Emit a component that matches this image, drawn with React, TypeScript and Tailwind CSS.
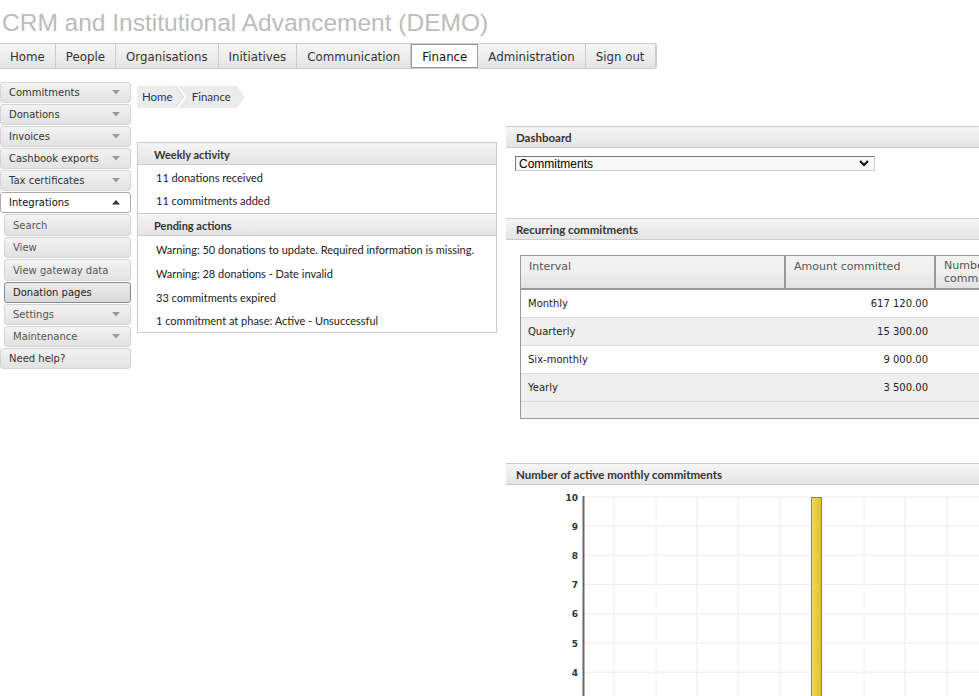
import React from "react";

const V = { fontFamily: '"DejaVu Sans", Verdana, sans-serif' };
const S = { fontFamily: 'Lato, "Open Sans", sans-serif' };

function NavItem({ label, active, last }: { label: string; active?: boolean; last?: boolean }) {
  return (
    <div
      className={
        "flex h-full items-center px-[10px] pt-[3px] text-[11.8px] border-r " +
        (active
          ? "bg-white text-[#111] border border-[#999] -my-px h-[26px]"
          : "bg-gradient-to-b from-[#f6f6f6] to-[#e4e4e4] text-[#333] border-[#ccc]") +
        (last ? " rounded-r-[3px]" : "")
      }
    >
      {label}
    </div>
  );
}

function DownArrow() {
  return (
    <svg width="8" height="5" viewBox="0 0 8 5">
      <path d="M0 0 L8 0 L4 4.5 Z" fill="#999" />
    </svg>
  );
}
function UpArrow() {
  return (
    <svg width="8" height="5" viewBox="0 0 8 5">
      <path d="M0 4.5 L8 4.5 L4 0 Z" fill="#333" />
    </svg>
  );
}

function SideItem({ label, arrow, sub, active, open, tall }: { label: string; arrow?: boolean; sub?: boolean; active?: boolean; open?: boolean; tall?: boolean }) {
  let cls = "flex items-center justify-between rounded-[3px] border text-[10px] pr-[10px] ";
  cls += tall ? "h-[22px] " : "h-[21px] ";
  cls += sub ? "ml-[4px] pl-[8px] " : "pl-[8px] ";
  if (open) cls += "bg-white border-[#aaa] text-[#111] ";
  else if (active) cls += "bg-gradient-to-b from-[#ececec] to-[#d8d8d8] border-[#888] text-[#222] ";
  else cls += "bg-gradient-to-b from-[#f3f3f3] to-[#e2e2e2] border-[#d4d4d4] " + (sub ? "text-[#555] " : "text-[#333] ");
  return (
    <div className={cls} style={V}>
      <span>{label}</span>
      {open ? <UpArrow /> : arrow ? <DownArrow /> : null}
    </div>
  );
}

function PanelHeader({ title, left }: { title: string; left?: boolean }) {
  return (
    <div
      className={
        "flex items-center bg-gradient-to-b from-[#f5f5f5] to-[#e5e5e5] font-bold text-[#333] " +
        (left ? "h-[22px] pl-[16px] pt-[3px] text-[11px] border-b border-[#ccc]" : "h-[20px] pl-[10px] pt-[1px] text-[11.5px]")
      }
      style={S}
    >
      {title}
    </div>
  );
}

function Chart() {
  const hy = [10, 39.2, 68.4, 97.6, 126.8, 156, 185.2];
  const vx = [108, 150, 191, 232, 274, 316, 358, 399, 441];
  return (
    <svg width="473" height="214" viewBox="0 0 473 214" className="block">
      {hy.map((y) => (
        <line key={y} x1="77" x2="473" y1={y} y2={y} stroke="#eeeeee" strokeWidth="1" />
      ))}
      {vx.map((x) => (
        <line key={x} x1={x} x2={x} y1="10" y2="214" stroke="#eeeeee" strokeWidth="1" />
      ))}
      <defs>
        <linearGradient id="bar" x1="0" x2="1" y1="0" y2="0">
          <stop offset="0" stopColor="#f0dc60" />
          <stop offset="1" stopColor="#dcc020" />
        </linearGradient>
      </defs>
      <rect x="305.5" y="10.5" width="10" height="210" fill="url(#bar)" stroke="#8a8460" strokeWidth="1" />
      <line x1="77.5" x2="77.5" y1="9" y2="214" stroke="#666" strokeWidth="2" />
      {["10", "9", "8", "7", "6", "5", "4"].map((t, i) => (
        <text key={t} x="72" y={hy[i] + 3.5} textAnchor="end" fontSize="9" fontWeight="bold" fill="#333" style={V}>
          {t}
        </text>
      ))}
    </svg>
  );
}

export default function App() {
  return (
    <div className="w-[979px] h-[696px] overflow-hidden bg-white">
      <div
        className="h-[43px] pl-[2px] pt-[8px] text-[24.5px] leading-[30px] text-[#bcbcbc]"
        style={{ fontFamily: '"Liberation Sans", Arial, sans-serif' }}
      >
        CRM and Institutional Advancement (DEMO)
      </div>
      <div className="flex">
        <div className="flex h-[26px] items-center border-y border-[#ccc] rounded-r-[3px] border-r" style={V}>
          <NavItem label="Home" />
          <NavItem label="People" />
          <NavItem label="Organisations" />
          <NavItem label="Initiatives" />
          <NavItem label="Communication" />
          <NavItem label="Finance" active />
          <NavItem label="Administration" />
          <NavItem label="Sign out" last />
        </div>
      </div>
      <div className="flex pt-[13px]">
        <div className="w-[131px] shrink-0 flex flex-col gap-px">
          <SideItem label="Commitments" arrow />
          <SideItem label="Donations" arrow />
          <SideItem label="Invoices" arrow />
          <SideItem label="Cashbook exports" arrow />
          <SideItem label="Tax certificates" arrow />
          <SideItem label="Integrations" open />
          <SideItem label="Search" sub tall />
          <SideItem label="View" sub />
          <SideItem label="View gateway data" sub tall />
          <SideItem label="Donation pages" sub active />
          <SideItem label="Settings" sub arrow />
          <SideItem label="Maintenance" sub arrow />
          <SideItem label="Need help?" />
        </div>
        <div className="flex-1 pl-[6px] pt-[4px]">
          <div
            className="flex h-[22px] w-[108px] items-center bg-[#ececec] text-[11.5px]"
            style={{ ...S, clipPath: "polygon(0 0, 100px 0, 108px 11px, 100px 22px, 0 22px)" }}
          >
            <span className="pl-[5px] text-[#2c2c6c]">Home</span>
            <svg width="14" height="22" viewBox="0 0 14 22" className="ml-[1px]">
              <path d="M3 0 L11 11 L3 22" fill="none" stroke="#ffffff" strokeWidth="2" />
              <path d="M1.5 0 L9.5 11 L1.5 22" fill="none" stroke="#d8d8d8" strokeWidth="1" />
            </svg>
            <span className="pl-[4px] text-[#333]">Finance</span>
          </div>
          <div className="flex items-start">
            <div className="w-[360px] mt-[34px] border border-[#ccc] text-[11px] text-[#222]" style={S}>
              <PanelHeader title="Weekly activity" left />
              <div className="pl-[18px] pt-[2px]">
                <div className="h-[23px] flex items-center">11 donations received</div>
                <div className="h-[23px] flex items-center">11 commitments added</div>
              </div>
              <div className="border-t border-[#ccc]">
                <PanelHeader title="Pending actions" left />
              </div>
              <div className="pl-[18px] pt-[2px]">
                <div className="h-[24px] flex items-center">Warning: 50 donations to update. Required information is missing.</div>
                <div className="h-[24px] flex items-center">Warning: 28 donations - Date invalid</div>
                <div className="h-[24px] flex items-center">33 commitments expired</div>
                <div className="h-[22px] flex items-center">1 commitment at phase: Active - Unsuccessful</div>
              </div>
            </div>
            <div className="ml-[9px] mt-[18px] w-[560px] shrink-0">
              <div className="border-y border-[#ccc]">
                <PanelHeader title="Dashboard" />
              </div>
              <div className="pl-[9px] pt-[8px]">
                <div
                  className="flex h-[15px] w-[360px] items-center justify-between border border-[#ccc] border-l-[#777] border-t-[#777] bg-[#f8f8f8] pl-[3px] pr-[5px] text-[12px] text-black"
                  style={{ fontFamily: '"Liberation Sans", Arial, sans-serif' }}
                >
                  <span>Commitments</span>
                  <svg width="10" height="7" viewBox="0 0 10 7">
                    <path d="M1 1 L5 5 L9 1" fill="none" stroke="#111" strokeWidth="2" />
                  </svg>
                </div>
              </div>
              <div className="mt-[47px] border-y border-[#ccc]">
                <PanelHeader title="Recurring commitments" />
              </div>
              <div className="pl-[14px] pt-[15px]">
                <div className="border border-[#999] w-[560px] bg-[#efefef]" style={V}>
                  <div className="flex h-[34px] border-b-2 border-[#999] bg-gradient-to-b from-[#f2f2f2] via-[#f0f0f0] to-[#e2e2e2] text-[11px] text-[#555]">
                    <div className="w-[265px] border-r-2 border-[#999] pl-[8px] pt-[3px]">Interval</div>
                    <div className="w-[150px] border-r-2 border-[#999] pl-[8px] pt-[3px]">Amount committed</div>
                    <div className="flex-1 pl-[8px] pt-[3px] leading-[13px]">
                      Number of
                      <br />
                      commitments
                    </div>
                  </div>
                  {[
                    ["Monthly", "617 120.00", "bg-white"],
                    ["Quarterly", "15 300.00", "bg-[#efefef]"],
                    ["Six-monthly", "9 000.00", "bg-white"],
                    ["Yearly", "3 500.00", "bg-[#efefef]"],
                  ].map(([a, b, bg]) => (
                    <div key={a} className={"flex h-[28px] items-center border-b border-[#ddd] text-[10px] text-[#222] " + bg}>
                      <div className="w-[265px] pl-[7px]">{a}</div>
                      <div className="w-[150px] pr-[8px] text-right">{b}</div>
                      <div className="flex-1"></div>
                    </div>
                  ))}
                  <div className="h-[16px]"></div>
                </div>
              </div>
              <div className="mt-[44px] border-y border-[#ccc]">
                <PanelHeader title="Number of active monthly commitments" />
              </div>
              <div className="pt-[2px]">
                <Chart />
              </div>
            </div>
          </div>
        </div>
      </div>
    </div>
  );
}
